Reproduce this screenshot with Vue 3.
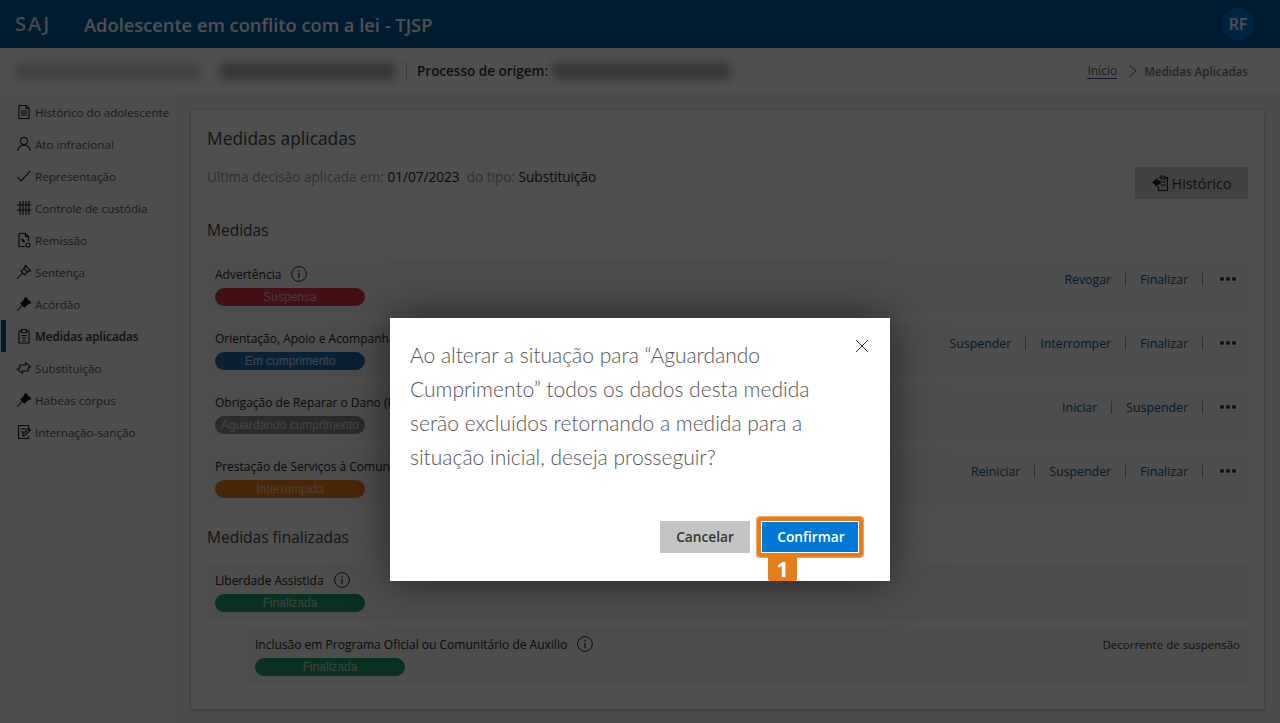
<template>
  <div class="page">
    <header class="topbar">
      <div class="brand">SAJ</div>
      <div class="app-title">Adolescente em conflito com a lei - TJSP</div>
      <div class="avatar">RF</div>
    </header>

    <div class="subbar">
      <span class="blurred w1"></span>
      <span class="blurred w2"></span>
      <span class="divider"></span>
      <span class="origin">Processo de origem:</span>
      <span class="blurred w3"></span>
      <nav class="crumbs">
        <a class="crumb-link">Início</a>
        <svg width="11" height="14" viewBox="0 0 11 14" fill="none" stroke="#555" stroke-width="1"><path d="M2 1 9 7l-7 6" /></svg>
        <span class="crumb-now">Medidas Aplicadas</span>
      </nav>
    </div>

    <div class="content">
      <aside class="sidebar">
        <a v-for="item in menu" :key="item.label" class="menu-item" :class="{ active: item.active }">
          <svg class="menu-icon" width="16" height="16" viewBox="0 0 16 16" fill="none" stroke="#1a1a1a" stroke-width="1.1" v-html="item.icon"></svg>
          <span>{{ item.label }}</span>
        </a>
      </aside>

      <main class="card">
        <div class="card-head">
          <div>
            <h1 class="title">Medidas aplicadas</h1>
            <p class="last">
              Ultima decisão aplicada em: <b>01/07/2023</b>&nbsp; do tipo: <b>Substituição</b>
            </p>
          </div>
          <button class="history">
            <svg width="18" height="18" viewBox="0 0 18 18" fill="none" stroke="#222" stroke-width="1.1">
              <path d="M7 3.5h2V2h3v1.5h3.5v13H6.5v-4" />
              <path d="M9 3.5V5h5V3.5M9 8h5M9 11h5" />
              <path d="M1 8.5 5 5v2h3v3H5v2z" fill="#222" />
            </svg>
            Histórico
          </button>
        </div>

        <h2 class="section">Medidas</h2>
        <div class="rows">
          <div v-for="row in rows" :key="row.name" class="row">
            <div class="row-main">
              <div class="row-name" :class="{ plain: !row.info }">
                {{ row.name }}
                <svg v-if="row.info" class="info" width="16" height="16" viewBox="0 0 16 16" fill="none" stroke="#222"><circle cx="8" cy="8" r="7.4" /><path d="M8 4v1.4M8 7v5" stroke-width="1.2" /></svg>
              </div>
              <div class="badge" :class="row.kind">{{ row.status }}</div>
            </div>
            <div class="actions">
              <a v-for="act in row.actions" :key="act" class="action">{{ act }}</a>
              <span class="dots"><i></i><i></i><i></i></span>
            </div>
          </div>
        </div>

        <h2 class="section finished">Medidas finalizadas</h2>
        <div class="row final">
          <div class="row-main">
            <div class="row-name">
              Liberdade Assistida
              <svg class="info" width="16" height="16" viewBox="0 0 16 16" fill="none" stroke="#222"><circle cx="8" cy="8" r="7.4" /><path d="M8 4v1.4M8 7v5" stroke-width="1.2" /></svg>
            </div>
            <div class="badge green">Finalizada</div>
          </div>
        </div>
        <div class="row child">
          <div class="row-main">
            <div class="row-name">
              Inclusão em Programa Oficial ou Comunitário de Auxilio
              <svg class="info" width="16" height="16" viewBox="0 0 16 16" fill="none" stroke="#222"><circle cx="8" cy="8" r="7.4" /><path d="M8 4v1.4M8 7v5" stroke-width="1.2" /></svg>
            </div>
            <div class="badge green">Finalizada</div>
          </div>
          <div class="origin-note">Decorrente de suspensão</div>
        </div>
      </main>
    </div>

    <div class="overlay"></div>

    <div class="modal">
      <svg class="close" width="14" height="14" viewBox="0 0 14 14" stroke="#333" stroke-width="1"><path d="M1 1l12 12M13 1 1 13" /></svg>
      <p class="message">Ao alterar a situação para “Aguardando<br>Cumprimento” todos os dados desta medida<br>serão excluídos retornando a medida para a<br>situação inicial, deseja prosseguir?</p>
      <div class="modal-actions">
        <button class="btn cancel">Cancelar</button>
        <div class="highlight">
          <button class="btn confirm">Confirmar</button>
          <span class="step">1</span>
        </div>
      </div>
    </div>
  </div>
</template>

<script setup>
const menu = [
  { label: 'Histórico do adolescente', icon: '<path d="M3 1.5h7l3 3v10H3z"/><path d="M10 1.5v3h3M5 7h6M5 9h6M5 11h6"/>' },
  { label: 'Ato infracional', icon: '<circle cx="8" cy="5" r="3.6"/><path d="M1.8 15c.4-3.6 2.6-6 6.2-6s5.8 2.4 6.2 6"/>' },
  { label: 'Representação', icon: '<path d="M1.5 9l3.5 4L14.5 3"/>' },
  { label: 'Controle de custódia', icon: '<path d="M4 1v14M7 1v14M10 1v14M13 1v14M1 5h14M1 10h14"/>' },
  { label: 'Remissão', icon: '<path d="M3 1.5h6.5l3 3V9M9.500 1.500v3h3M9 14.500H3v-13"/><path d="M5.500 7l3 3" stroke-width="2"/><circle cx="12" cy="13" r="2"/>' },
  { label: 'Sentença', icon: '<path d="M9.500 1.500l5 5-3 1.500-3.500-3.500zM8 4.500 5 7.500l3.500 3.500 3-3M6.500 9 1 15"/>' },
  { label: 'Acórdão', icon: '<path d="M9.500 1.500l5 5-3 1.500-3.500-3.500z" fill="#1a1a1a"/><path d="M8 4.500 5 7.500l3.500 3.500 3-3z" fill="#1a1a1a"/><path d="M6.500 9 1 15"/>' },
  { label: 'Medidas aplicadas', active: true, icon: '<path d="M5.500 3H3v12h10V3h-2.500"/><path d="M5.500 1.500h5V4.500h-5zM5.500 7.500h5M5.500 10h5M6.500 12.500h3"/>' },
  { label: 'Substituição', icon: '<path d="M3.500 7V5h6V2.800l5 3.700-3 2.300M12.500 9v2h-6v2.200l-5-3.700 3-2.300"/>' },
  { label: 'Habeas corpus', icon: '<path d="M9.500 1.500l5 5-3 1.500-3.500-3.500z" fill="#1a1a1a"/><path d="M8 4.500 5 7.500l3.500 3.500 3-3z" fill="#1a1a1a"/><path d="M6.500 9 1 15"/>' },
  { label: 'Internação-sanção', icon: '<path d="M12.500 6V1.500H2.500v13h10V12M5 5h5M5 8h3"/><path d="M6.500 12l.5-2.500 6-5 1.500 1.500-6 5.500z"/>' }
]

const rows = [
  { name: 'Advertência', info: true, status: 'Suspensa', kind: 'red', actions: ['Revogar', 'Finalizar'] },
  { name: 'Orientação, Apoio e Acompanha', status: 'Em cumprimento', kind: 'blue', actions: ['Suspender', 'Interromper', 'Finalizar'] },
  { name: 'Obrigação de Reparar o Dano (R', status: 'Aguardando cumprimento', kind: 'gray', actions: ['Iniciar', 'Suspender'] },
  { name: 'Prestação de Serviços à Comuni', status: 'Interrompida', kind: 'orange', actions: ['Reiniciar', 'Suspender', 'Finalizar'] }
]
</script>

<style>
body {
  margin: 0;
}
</style>

<style scoped>
.page {
  position: relative;
  display: flex;
  flex-direction: column;
  height: 100vh;
  overflow: hidden;
  background: #f2f2f2;
  font-family: "Open Sans", "Noto Sans", sans-serif;
  color: #333;
}

.topbar {
  display: flex;
  align-items: center;
  flex: 0 0 48px;
  padding: 0 26px 0 15px;
  background: #005a9e;
  color: #fff;
}

.brand {
  width: 37px;
  padding-right: 15px;
  margin-right: 16px;
  border-right: 1px solid #0a4a80;
  font-size: 20px;
  font-weight: 600;
  letter-spacing: 2px;
  line-height: 36px;
  color: #e4e4e4;
}

.app-title {
  flex: 1;
  font-size: 18.3px;
  font-weight: 600;
}

.avatar {
  width: 32px;
  height: 32px;
  border-radius: 50%;
  background: #0078d4;
  font-size: 16px;
  font-weight: 600;
  line-height: 32px;
  text-align: center;
}

.subbar {
  display: flex;
  align-items: center;
  flex: 0 0 46px;
  padding: 0 32px 0 15px;
  background: #fff;
  font-size: 13.5px;
}

.blurred {
  height: 16px;
  background: #aaa;
  filter: blur(5px);
}

.w1 { width: 185px; margin-right: 20px; background: #ccc; }
.w2 { width: 175px; margin-right: 11px; }
.w3 { width: 177px; margin-left: 5px; }

.divider {
  width: 1px;
  height: 18px;
  margin-right: 10px;
  background: #bbb;
}

.origin {
  font-weight: 600;
  color: #333;
}

.crumbs {
  display: flex;
  align-items: center;
  gap: 6px;
  margin-left: auto;
  font-size: 11.6px;
}

.crumb-link {
  margin-right: 4px;
  border-bottom: 1px solid #5c2d91;
  font-size: 12px;
  color: #666;
  line-height: 14px;
}

.crumb-now {
  font-weight: 600;
  color: #777;
}

.content {
  display: flex;
  flex: 1;
  min-height: 0;
}

.sidebar {
  flex: 0 0 175px;
  padding-top: 2px;
  background: #f7f7f7;
}

.menu-item {
  position: relative;
  display: flex;
  align-items: center;
  gap: 3px;
  height: 32px;
  padding-left: 16px;
  font-size: 11.65px;
  color: #555;
}

.menu-item.active {
  font-weight: 600;
  color: #333;
}

.menu-item.active::before {
  content: "";
  position: absolute;
  left: 1px;
  top: 0;
  bottom: 0;
  width: 5px;
  background: #005a9e;
}

.menu-icon {
  flex: none;
}

.card {
  flex: 1;
  margin: 16px 16px 14px;
  padding: 16px 16px 0;
  background: #fff;
  box-shadow: 0 1px 3px rgba(0, 0, 0, 0.35);
}

.card-head {
  display: flex;
  justify-content: space-between;
  align-items: flex-end;
  height: 73px;
}

.title {
  margin: 0 0 17px;
  font-size: 17.4px;
  font-weight: 400;
  line-height: 24px;
  color: #444;
}

.last {
  margin: 0 0 12px;
  font-size: 13.6px;
  line-height: 20px;
  color: #999;
}

.last b {
  font-weight: 400;
  color: #222;
}

.history {
  display: flex;
  align-items: center;
  justify-content: center;
  gap: 2px;
  width: 113px;
  height: 32px;
  padding: 0;
  border: 0;
  background: #d0d0d0;
  font-family: inherit;
  font-size: 14.4px;
  font-weight: 400;
  color: #333;
}

.section {
  margin: 19px 0 16px;
  font-size: 15.5px;
  font-weight: 400;
  line-height: 24px;
  color: #444;
}

.section.finished {
  margin-bottom: 15px;
}

.rows {
  display: flex;
  flex-direction: column;
  gap: 8px;
}

.row {
  display: flex;
  justify-content: space-between;
  height: 56px;
  box-sizing: border-box;
  padding: 7px 12px 0 8px;
  background: #f8f8f8;
}

.row.child {
  margin: 8px 0 0 40px;
}

.row-name {
  display: flex;
  align-items: center;
  height: 18px;
  margin-bottom: 5px;
  font-size: 12px;
  white-space: nowrap;
  color: #222;
}

.row-name.plain {
  display: block;
  line-height: 20px;
}

.info {
  margin-left: 10px;
}

.badge {
  width: 150px;
  height: 18px;
  border-radius: 9px;
  font-family: "Liberation Sans", Arial, sans-serif;
  font-size: 12px;
  line-height: 18px;
  text-align: center;
}

.red { background: #dc3545; color: #f3b9bf; }
.blue { background: #1f6cab; color: #cfe5f5; }
.gray { background: #8a8a8a; color: #ddd; }
.orange { background: #e57e19; color: #f6d2ad; }
.green { background: #1e9e6a; color: #b8e0cf; }

.actions {
  display: flex;
  align-items: center;
  align-self: flex-start;
  height: 28px;
  font-size: 12.35px;
}

.action {
  padding: 0 14px;
  border-right: 1px solid #999;
  line-height: 13px;
  font-weight: 500;
  color: #07528f;
}

.dots {
  display: flex;
  gap: 2px;
  margin-left: 17px;
  margin-top: -1px;
}

.dots i {
  width: 4px;
  height: 4px;
  border-radius: 50%;
  background: #333;
}

.origin-note {
  padding-top: 2px;
  margin-right: -4px;
  font-size: 11.5px;
  color: #333;
}

.overlay {
  position: absolute;
  inset: 0;
  background: rgba(0, 0, 0, 0.69);
}

.modal {
  position: absolute;
  left: 390px;
  top: 318px;
  width: 500px;
  height: 263px;
  box-sizing: border-box;
  padding: 20px 20px 0;
  background: #fff;
  box-shadow: 0 0 40px rgba(0, 0, 0, 0.55);
}

.close {
  position: absolute;
  right: 21px;
  top: 21px;
}

.message {
  margin: 0;
  font-family: "Lato", "Open Sans", sans-serif;
  font-size: 21px;
  font-weight: 300;
  line-height: 34px;
  color: #555;
  white-space: nowrap;
}

.modal-actions {
  position: absolute;
  right: 32px;
  top: 203px;
  display: flex;
  align-items: flex-start;
  gap: 7px;
}

.btn {
  height: 32px;
  padding: 0 0 2px;
  border: 0;
  font-family: inherit;
  font-size: 13.7px;
  font-weight: 600;
}

.cancel {
  width: 90px;
  background: #c4c4c4;
  color: #333;
}

.confirm {
  display: block;
  width: 96px;
  height: 30px;
  padding-left: 2px;
  background: #0078d7;
  color: #fff;
}

.highlight {
  position: relative;
  margin-top: -4px;
  margin-right: -5px;
  padding: 1px;
  border: 4px solid #e57e19;
  border-radius: 3px;
  box-shadow: 0 0 0 1px #efa45c;
}

.step {
  position: absolute;
  left: 7px;
  top: 34px;
  width: 29px;
  height: 26px;
  border-radius: 0 0 2px 2px;
  background: #e57e19;
  font-size: 22px;
  font-weight: 700;
  line-height: 27px;
  text-align: center;
  color: #fff;
}
</style>
